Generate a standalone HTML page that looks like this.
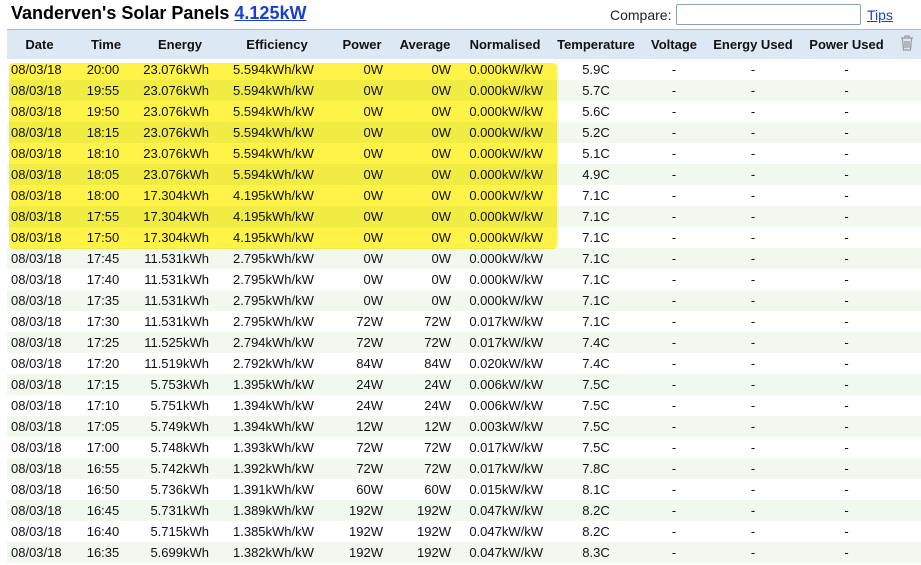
<!DOCTYPE html>
<html><head><style>
body{margin:0;background:#fff;font-family:"Liberation Sans",Arial,sans-serif;color:#000;width:921px;height:565px;overflow:hidden;position:relative}
.title{position:absolute;left:11px;top:3px;font-size:18px;font-weight:bold}
.title a{color:#1a3fcc;text-decoration:underline}
.cmp{position:absolute;left:610px;top:7px;font-size:14px;color:#222}
.inp{position:absolute;left:676px;top:4px;width:183px;height:19px;border:1px solid #8aa0b8;border-radius:2px}
.tips{position:absolute;left:867px;top:7px;font-size:14px;color:#1a3fcc;text-decoration:underline}
table{position:absolute;left:7px;top:29px;border-collapse:collapse;table-layout:fixed;width:914px;font-size:13px}
th{background:#dde8f5;height:29px;font-weight:bold;font-size:13px;padding:0;border-top:1px solid #aab8dd;color:#111}
td{height:21px;padding:0;white-space:nowrap;color:#111}
tr.g td{background:#f1f8ee}
td.l{text-align:left;padding-left:4px}
td.c{text-align:center}
td.r{text-align:right}
.hl{position:absolute;left:9px;top:63px;width:548px;height:186px;background:rgba(255,238,0,0.72);mix-blend-mode:multiply;border-radius:4px}
</style></head><body>
<div class="title">Vanderven's Solar Panels <a>4.125kW</a></div>
<div class="cmp">Compare:</div><div class="inp"></div><div class="tips">Tips</div>
<table>
<colgroup><col style="width:65px"><col style="width:68px"><col style="width:80px"><col style="width:114px"><col style="width:56px"><col style="width:70px"><col style="width:90px"><col style="width:92px"><col style="width:64px"><col style="width:94px"><col style="width:93px"><col style="width:28px"></colgroup>
<tr><th>Date</th><th>Time</th><th>Energy</th><th>Efficiency</th><th>Power</th><th>Average</th><th>Normalised</th><th>Temperature</th><th>Voltage</th><th>Energy Used</th><th>Power Used</th><th><svg width="14" height="16" viewBox="0 0 14 16"><path d="M1 3h12M5 3V1h4v2M2.5 3.5l1 11.5h7l1-11.5M5 6v7M7 6v7M9 6v7" fill="none" stroke="#999" stroke-width="1.2"/></svg></th></tr>
<tbody id="b"></tbody>
</table>
<div class="hl"></div>
<script>
var d=[["20:00","23.076kWh","5.594kWh/kW","0W","0W","0.000kW/kW","5.9C"],["19:55","23.076kWh","5.594kWh/kW","0W","0W","0.000kW/kW","5.7C"],["19:50","23.076kWh","5.594kWh/kW","0W","0W","0.000kW/kW","5.6C"],["18:15","23.076kWh","5.594kWh/kW","0W","0W","0.000kW/kW","5.2C"],["18:10","23.076kWh","5.594kWh/kW","0W","0W","0.000kW/kW","5.1C"],["18:05","23.076kWh","5.594kWh/kW","0W","0W","0.000kW/kW","4.9C"],["18:00","17.304kWh","4.195kWh/kW","0W","0W","0.000kW/kW","7.1C"],["17:55","17.304kWh","4.195kWh/kW","0W","0W","0.000kW/kW","7.1C"],["17:50","17.304kWh","4.195kWh/kW","0W","0W","0.000kW/kW","7.1C"],["17:45","11.531kWh","2.795kWh/kW","0W","0W","0.000kW/kW","7.1C"],["17:40","11.531kWh","2.795kWh/kW","0W","0W","0.000kW/kW","7.1C"],["17:35","11.531kWh","2.795kWh/kW","0W","0W","0.000kW/kW","7.1C"],["17:30","11.531kWh","2.795kWh/kW","72W","72W","0.017kW/kW","7.1C"],["17:25","11.525kWh","2.794kWh/kW","72W","72W","0.017kW/kW","7.4C"],["17:20","11.519kWh","2.792kWh/kW","84W","84W","0.020kW/kW","7.4C"],["17:15","5.753kWh","1.395kWh/kW","24W","24W","0.006kW/kW","7.5C"],["17:10","5.751kWh","1.394kWh/kW","24W","24W","0.006kW/kW","7.5C"],["17:05","5.749kWh","1.394kWh/kW","12W","12W","0.003kW/kW","7.5C"],["17:00","5.748kWh","1.393kWh/kW","72W","72W","0.017kW/kW","7.5C"],["16:55","5.742kWh","1.392kWh/kW","72W","72W","0.017kW/kW","7.8C"],["16:50","5.736kWh","1.391kWh/kW","60W","60W","0.015kW/kW","8.1C"],["16:45","5.731kWh","1.389kWh/kW","192W","192W","0.047kW/kW","8.2C"],["16:40","5.715kWh","1.385kWh/kW","192W","192W","0.047kW/kW","8.2C"],["16:35","5.699kWh","1.382kWh/kW","192W","192W","0.047kW/kW","8.3C"]];
var h="";d.forEach(function(r,i){h+='<tr'+(i%2?' class="g"':'')+'><td class="l">08/03/18</td><td class="c" style="padding-right:6px">'+r[0]+'</td><td class="r" style="padding-right:11px">'+r[1]+'</td><td class="l" style="padding-left:13px">'+r[2]+'</td><td class="r" style="padding-right:7px">'+r[3]+'</td><td class="r" style="padding-right:9px">'+r[4]+'</td><td class="r" style="padding-right:7px">'+r[5]+'</td><td class="c">'+r[6]+'</td><td class="c">-</td><td class="c">-</td><td class="c">-</td><td></td></tr>';});
document.getElementById("b").innerHTML=h;
</script>
</body></html>
